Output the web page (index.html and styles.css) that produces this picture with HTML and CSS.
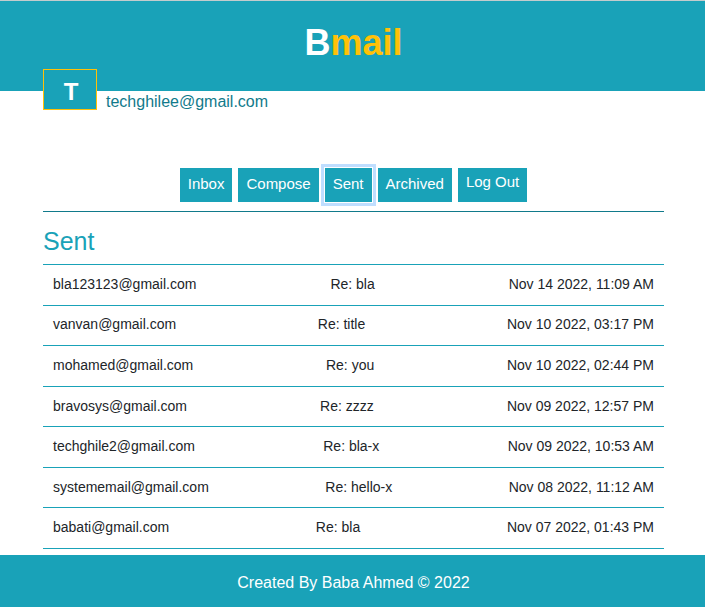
FILE: index.html
```html
<!DOCTYPE html>
<html lang="en">
<head>
<meta charset="utf-8">
<title>Bmail</title>
<link rel="stylesheet" href="styles.css">
</head>
<body>
<header class="banner">
  <h1 class="brand">B<span class="brand-accent">mail</span></h1>
</header>
<main class="content">
  <div class="account">
    <div class="avatar">T</div>
    <span class="address">techghilee@gmail.com</span>
  </div>
  <nav class="toolbar">
    <button class="tab" type="button">Inbox</button>
    <button class="tab" type="button">Compose</button>
    <button class="tab tab-active" type="button">Sent</button>
    <button class="tab" type="button">Archived</button>
    <a class="tab tab-link" href="#logout">Log Out</a>
  </nav>
  <h2 class="mailbox">Sent</h2>
  <ul class="mails">
    <li class="mail"><span>bla123123@gmail.com</span><span>Re: bla</span><span>Nov 14 2022, 11:09 AM</span></li>
    <li class="mail"><span>vanvan@gmail.com</span><span>Re: title</span><span>Nov 10 2022, 03:17 PM</span></li>
    <li class="mail"><span>mohamed@gmail.com</span><span>Re: you</span><span>Nov 10 2022, 02:44 PM</span></li>
    <li class="mail"><span>bravosys@gmail.com</span><span>Re: zzzz</span><span>Nov 09 2022, 12:57 PM</span></li>
    <li class="mail"><span>techghile2@gmail.com</span><span>Re: bla-x</span><span>Nov 09 2022, 10:53 AM</span></li>
    <li class="mail"><span>systememail@gmail.com</span><span>Re: hello-x</span><span>Nov 08 2022, 11:12 AM</span></li>
    <li class="mail"><span>babati@gmail.com</span><span>Re: bla</span><span>Nov 07 2022, 01:43 PM</span></li>
  </ul>
</main>
<footer class="footer">Created By Baba Ahmed © 2022</footer>
</body>
</html>
```
FILE: styles.css
```css
* {
  box-sizing: border-box;
}

body {
  display: flex;
  flex-direction: column;
  min-height: 100vh;
  margin: 0;
  background: #fff;
  color: #212529;
  font: 16px/24px "Liberation Sans", Arial, sans-serif;
}

.banner {
  padding: 20px 0 26px 2px;
  border-top: 1px solid #c4cccd;
  background: #19a2b8;
  text-align: center;
}

.brand {
  margin: 0;
  color: #fff;
  font-size: 36px;
  line-height: 44px;
}

.brand-accent {
  color: #ffc107;
}

.content {
  display: flex;
  flex: 1;
  flex-direction: column;
  padding: 0 41px 6px 43px;
}

.account {
  display: flex;
  align-items: flex-end;
  gap: 9px;
  margin-top: -22px;
}

.avatar {
  width: 54px;
  padding: 5px 0 0 2px;
  border: 1px solid #ffc107;
  background: #19a2b8;
  color: #fff;
  font-size: 24px;
  font-weight: bold;
  line-height: 34px;
  text-align: center;
}

.address {
  line-height: 16px;
  color: #117a8b;
}

.toolbar {
  display: flex;
  justify-content: center;
  gap: 6px;
  margin-top: 58px;
  padding-bottom: 9px;
  border-bottom: 1px solid #117a8b;
}

.tab {
  height: 34px;
  padding: 0 8px 2px;
  border: 0;
  background: #19a2b8;
  color: #fff;
  font: 15px/32px "Liberation Sans", Arial, sans-serif;
  text-decoration: none;
}

.tab-active {
  outline: 3px solid #bfdeff;
  outline-offset: 1px;
}

.tab-link {
  line-height: 28px;
}

.mailbox {
  margin: 14px 0 8px;
  color: #19a2b8;
  font-size: 25px;
  font-weight: normal;
  line-height: 30px;
}

.mails {
  display: flex;
  flex: 1;
  flex-direction: column;
  margin: 0;
  padding: 0;
  border-top: 1px solid #19a2b8;
  list-style: none;
}

.mail {
  display: flex;
  flex: 1;
  align-items: center;
  justify-content: space-between;
  padding: 0 10px 2px;
  border-bottom: 1px solid #19a2b8;
  font-size: 14px;
}

.footer {
  padding: 16px 0 12px 2px;
  background: #19a2b8;
  color: #fff;
  text-align: center;
}
```
